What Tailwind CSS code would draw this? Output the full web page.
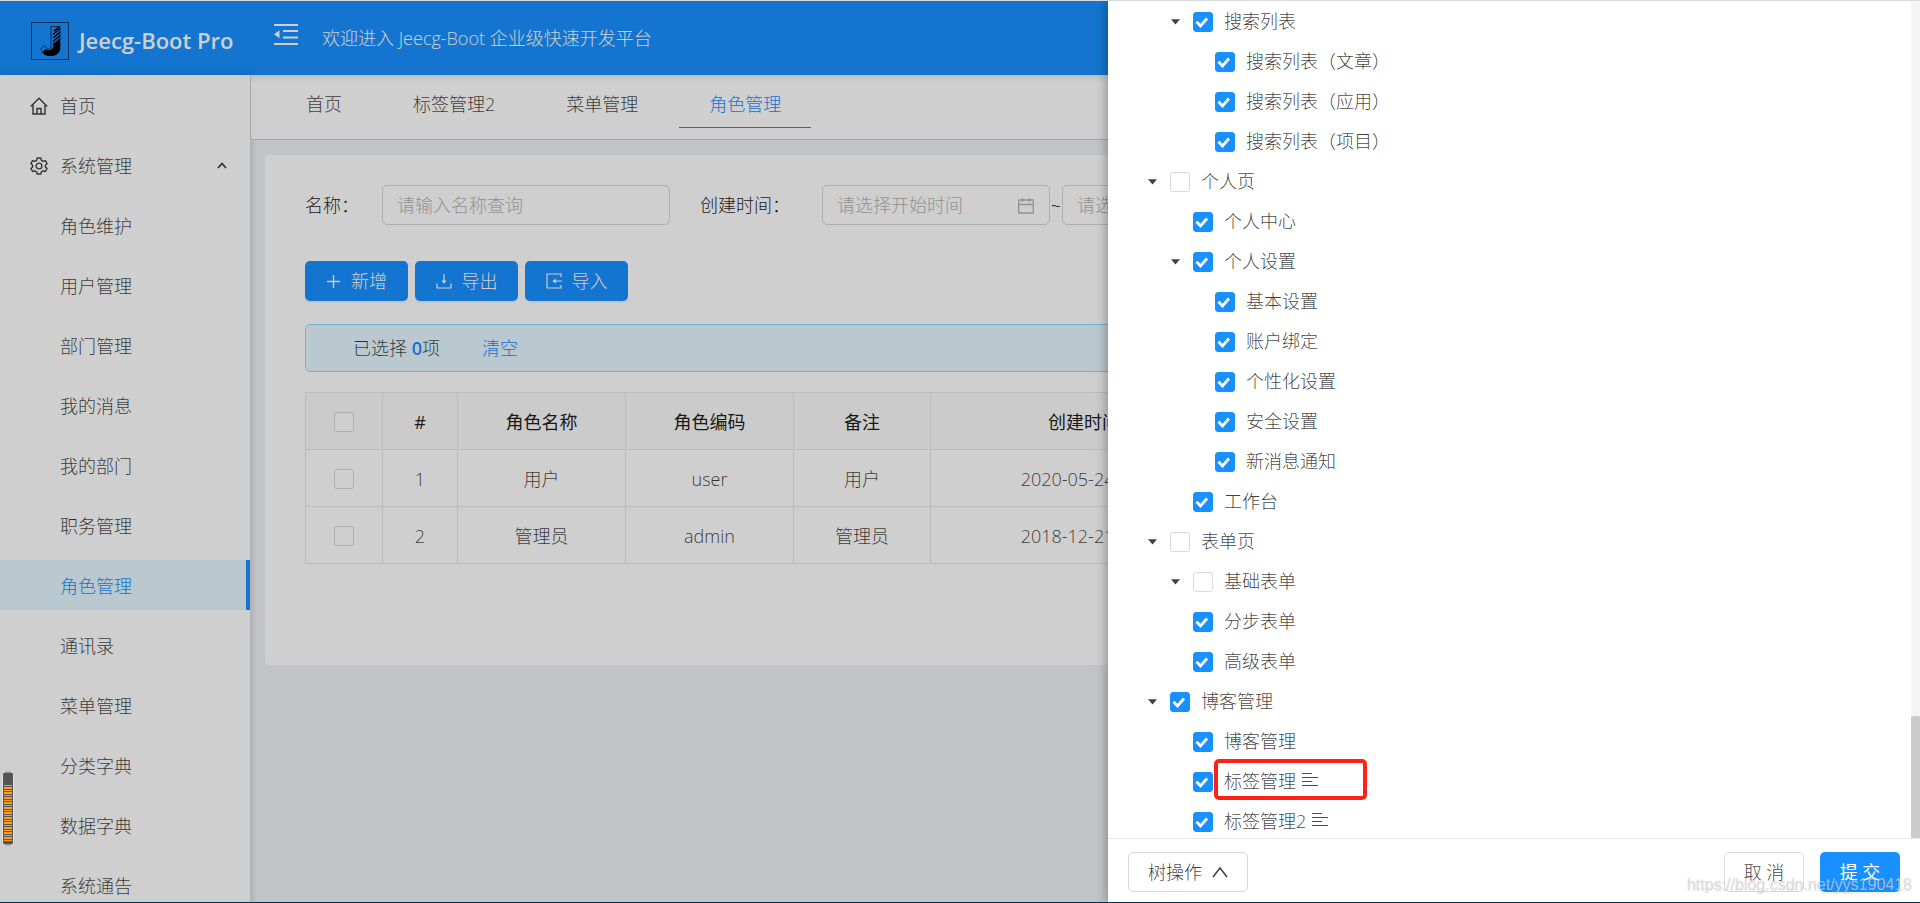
<!DOCTYPE html>
<html lang="zh-CN">
<head>
<meta charset="utf-8">
<title>Jeecg-Boot Pro</title>
<script src="https://cdn.jsdelivr.net/npm/@tailwindcss/browser@4"></script>
</head>
<body class="relative flex h-screen flex-col overflow-hidden bg-[#f0f2f5] font-['Open_Sans','Noto_Sans_CJK_SC',sans-serif] text-[18px] leading-6 font-light text-black/75">

<!-- Application -->
<header class="mt-px flex h-[74px] shrink-0 items-center bg-[#1890ff] text-white">
  <a href="#" class="flex w-[250px] items-center gap-[10px] pl-[31px] text-[22px] font-semibold whitespace-nowrap text-white">
    <svg class="mt-[6px] size-[38px]" viewBox="0 0 38 38" fill="none">
      <rect x=".5" y=".5" width="37" height="37" stroke="#0b3a6e"/>
      <path d="M20 4.500h9v21c0 5-4 8-9 8s-9-1-10-7l4-3c1 3 3 4 5 3 1-.5 1-2 1-4z" stroke="#0a3566" stroke-width="1"/>
      <path d="M29 18v8c0 5-4 8-9 8-4 0-7-1-8.500-4l3-3c3 2 7 1 8-3V21z" fill="#000"/>
      <path d="M23 9l5-4M22 12.500l7-6M22 16l7-6M22 19.500l7-6M22 23l7-6" stroke="#000" stroke-width="1.600"/>
    </svg>
    <span class="pt-1">Jeecg-Boot Pro</span>
  </a>
  <button type="button" aria-label="收起菜单" class="mb-[7px] ml-6">
    <svg class="h-[21px] w-6" viewBox="0 0 24 21" fill="currentColor"><path d="M0 0h24v2H0zM0 19h24v2H0zM9 6h15v2H9zM9 12.500h15v2H9zM0 10.200l5.500-4v8z"/></svg>
  </button>
  <span class="ml-6 whitespace-nowrap">欢迎进入 Jeecg-Boot 企业级快速开发平台</span>
</header>

<div class="flex min-h-0 flex-1">
  <aside class="relative z-10 w-[250px] shrink-0 overflow-hidden bg-white pt-[5px] shadow-[2px_0_6px_rgba(0,21,41,0.15)]">
    <nav class="flex flex-col gap-[10px]">
      <a href="#" class="flex h-[50px] items-center gap-3 pt-px pl-[30px]">
        <svg class="size-[18px]" viewBox="0 0 18 18" fill="none" stroke="currentColor" stroke-width="1.400"><path d="M.7 9.500 9 1.200l8.300 8.300M3 8v9h12V8M7 17v-5.500h4V17"/></svg>首页</a>
      <button type="button" class="flex h-[50px] items-center gap-3 pt-px pr-[23px] pl-[30px] text-left">
        <svg class="size-[18px]" viewBox="0 0 18 18" fill="none" stroke="currentColor" stroke-width="1.400" stroke-linejoin="round"><path d="M7.200 1h3.600l.6 2.300 1.700 1 2.300-.7 1.700 3-1.700 1.600v1.700l1.700 1.600-1.700 3-2.300-.7-1.700 1-.6 2.200H7.200l-.6-2.200-1.700-1-2.300.7-1.700-3 1.700-1.600V8.200L.9 6.600l1.700-3 2.300.7 1.700-1z"/><circle cx="9" cy="9" r="2.900"/></svg><span class="flex-1">系统管理</span>
        <svg class="h-[7px] w-[10px]" viewBox="0 0 10 7" fill="none" stroke="currentColor" stroke-width="1.800"><path d="m1 6 4-4.500L9 6"/></svg></button>
      <a href="#" class="flex h-[50px] items-center pt-px pl-[60px]">角色维护</a>
      <a href="#" class="flex h-[50px] items-center pt-px pl-[60px]">用户管理</a>
      <a href="#" class="flex h-[50px] items-center pt-px pl-[60px]">部门管理</a>
      <a href="#" class="flex h-[50px] items-center pt-px pl-[60px]">我的消息</a>
      <a href="#" class="flex h-[50px] items-center pt-px pl-[60px]">我的部门</a>
      <a href="#" class="flex h-[50px] items-center pt-px pl-[60px]">职务管理</a>
      <a href="#" class="flex h-[50px] items-center border-r-4 border-[#1890ff] bg-[#e6f7ff] pt-px pl-[60px] text-[#1890ff]">角色管理</a>
      <a href="#" class="flex h-[50px] items-center pt-px pl-[60px]">通讯录</a>
      <a href="#" class="flex h-[50px] items-center pt-px pl-[60px]">菜单管理</a>
      <a href="#" class="flex h-[50px] items-center pt-px pl-[60px]">分类字典</a>
      <a href="#" class="flex h-[50px] items-center pt-px pl-[60px]">数据字典</a>
      <a href="#" class="flex h-[50px] items-center pt-px pl-[60px]">系统通告</a>
    </nav>
  </aside>

  <div class="flex min-w-0 flex-1 flex-col">
    <nav class="relative z-10 flex h-[65px] shrink-0 items-start gap-[11px] border-b border-l border-[#ccced0] bg-white pl-[25px] shadow-[inset_0_6px_6px_-4px_rgba(0,21,41,0.12)]">
      <a href="#" class="flex h-[53px] items-center border-b border-transparent px-[30px] pt-[6px]">首页</a>
      <a href="#" class="flex h-[53px] items-center border-b border-transparent px-[30px] pt-[6px]">标签管理2</a>
      <a href="#" class="flex h-[53px] items-center border-b border-transparent px-[30px] pt-[6px]">菜单管理</a>
      <a href="#" class="flex h-[53px] items-center border-b border-[#1890ff] px-[30px] pt-[6px] text-[#1890ff]">角色管理</a>
    </nav>

    <main class="mx-[15px] mt-[15px] h-[510px] rounded-[3px] bg-white px-10 pt-[30px]">
      <form class="flex h-10 items-center text-black/90">
        <label for="name" class="w-[77px] whitespace-nowrap">名称：</label>
        <input id="name" type="text" placeholder="请输入名称查询" class="h-10 w-[288px] rounded-[5px] border border-[#d9d9d9] px-[14px] placeholder:text-[#b5b5b5]">
        <label for="start" class="ml-[30px] w-[122px] whitespace-nowrap">创建时间：</label>
        <div class="flex h-10 w-[228px] items-center rounded-[5px] border border-[#d9d9d9] pr-[15px] pl-[14px] text-[#b5b5b5]">
          <input id="start" type="text" placeholder="请选择开始时间" class="min-w-0 flex-1 placeholder:text-[#b5b5b5]">
          <svg class="h-[17px] w-4" viewBox="0 0 16 17" fill="none" stroke="currentColor" stroke-width="1.300"><path d="M.7 3h14.600v13H.7zM.7 7.500h14.600M4.500 1v4M11.500 1v4"/></svg>
        </div>
        <span class="w-3 text-center">~</span>
        <div class="flex h-10 w-[228px] items-center rounded-[5px] border border-[#d9d9d9] px-[14px]">
          <input type="text" aria-label="结束时间" placeholder="请选择结束时间" class="min-w-0 flex-1 placeholder:text-[#b5b5b5]">
        </div>
      </form>

      <div class="mt-9 flex gap-[7px] text-white">
        <button type="button" class="flex h-10 w-[103px] items-center justify-center gap-[10px] rounded-[5px] bg-[#1890ff] shadow-[0_2px_0_rgba(0,0,0,0.05)]">
          <svg class="size-[15px]" viewBox="0 0 15 15" stroke="currentColor" stroke-width="1.400"><path d="M7.500 1v13M1 7.500h13"/></svg>新增</button>
        <button type="button" class="flex h-10 w-[103px] items-center justify-center gap-[10px] rounded-[5px] bg-[#1890ff] shadow-[0_2px_0_rgba(0,0,0,0.05)]">
          <svg class="size-4" viewBox="0 0 16 16" fill="none" stroke="currentColor" stroke-width="1.200"><path d="M8 1v9M1 10.500V15h14v-4.500"/><path d="M5.500 7.500h5L8 10.800z" fill="currentColor" stroke="none"/></svg>导出</button>
        <button type="button" class="flex h-10 w-[103px] items-center justify-center gap-[10px] rounded-[5px] bg-[#1890ff] shadow-[0_2px_0_rgba(0,0,0,0.05)]">
          <svg class="size-4" viewBox="0 0 16 16" fill="none" stroke="currentColor" stroke-width="1.200"><path d="M15 4V1H1v14h14v-3M7 8h9"/><path d="M10 5.500v5L6.500 8z" fill="currentColor" stroke="none"/></svg>导入</button>
      </div>

      <div class="mt-[23px] flex h-12 items-center rounded-[5px] border border-[#91d5ff] bg-[#e6f7ff] pl-[47px]">
        <span>已选择&nbsp;<b class="font-semibold text-[#1890ff]">0</b>项</span>
        <a href="#" class="ml-[42px] text-[#1890ff]">清空</a>
      </div>

      <table class="mt-5 w-full table-fixed border-collapse text-center">
        <colgroup><col class="w-[77px]"><col class="w-[75px]"><col class="w-[168px]"><col class="w-[168px]"><col class="w-[137px]"><col class="w-[349px]"><col></colgroup>
        <thead>
          <tr class="h-[57px] bg-[#fafafa] text-black/90">
            <th class="border border-[#e8e8e8] pt-[2px]"><input type="checkbox" aria-label="全选" class="block size-5 mx-auto appearance-none rounded-[3px] border border-[#d9d9d9] bg-white"></th>
            <th class="border border-[#e8e8e8] pt-[2px] font-normal">#</th>
            <th class="border border-[#e8e8e8] pt-[2px] font-normal">角色名称</th>
            <th class="border border-[#e8e8e8] pt-[2px] font-normal">角色编码</th>
            <th class="border border-[#e8e8e8] pt-[2px] font-normal">备注</th>
            <th class="border border-[#e8e8e8] pt-[2px] font-normal"><span class="inline-flex items-center gap-7">创建时间<svg class="h-4 w-[14px] text-[#bfbfbf]" viewBox="0 0 14 16" fill="currentColor"><path d="m7 1 5 6H2zM7 15l5-6H2z"/></svg></span></th>
            <th class="border border-[#e8e8e8] pt-[2px] font-normal">操作</th>
          </tr>
        </thead>
        <tbody>
          <tr class="h-[57px]">
            <td class="border border-[#e8e8e8] pt-[2px]"><input type="checkbox" aria-label="选择用户" class="block size-5 mx-auto appearance-none rounded-[3px] border border-[#d9d9d9] bg-white"></td>
            <td class="border border-[#e8e8e8] pt-[2px]">1</td><td class="border border-[#e8e8e8] pt-[2px]">用户</td><td class="border border-[#e8e8e8] pt-[2px]">user</td><td class="border border-[#e8e8e8] pt-[2px]">用户</td><td class="border border-[#e8e8e8] pt-[2px]">2020-05-24 00:00:00</td><td class="border border-[#e8e8e8]"></td>
          </tr>
          <tr class="h-[57px]">
            <td class="border border-[#e8e8e8] pt-[2px]"><input type="checkbox" aria-label="选择管理员" class="block size-5 mx-auto appearance-none rounded-[3px] border border-[#d9d9d9] bg-white"></td>
            <td class="border border-[#e8e8e8] pt-[2px]">2</td><td class="border border-[#e8e8e8] pt-[2px]">管理员</td><td class="border border-[#e8e8e8] pt-[2px]">admin</td><td class="border border-[#e8e8e8] pt-[2px]">管理员</td><td class="border border-[#e8e8e8] pt-[2px]">2018-12-21 00:00:00</td><td class="border border-[#e8e8e8]"></td>
          </tr>
        </tbody>
      </table>
    </main>
  </div>
</div>

<!-- Mask and drawer -->
<div class="absolute inset-0 z-20 bg-black/19"></div>
<section aria-label="角色权限配置" class="absolute inset-y-0 right-0 z-30 flex w-[812px] flex-col bg-white shadow-[-2px_0_10px_rgba(0,0,0,0.3)]">
  <div class="flex min-h-0 flex-1">
    <ul id="tree" class="min-w-0 flex-1 overflow-hidden pt-[2px]"></ul>
    <div class="flex w-[9px] flex-col justify-end bg-[#f5f5f5]"><div class="h-[122px] rounded-t-[2px] bg-[#cbcbcb]"></div></div>
  </div>
  <footer class="flex h-[65px] shrink-0 items-start border-t border-[#e8e8e8] px-5 pt-[13px]">
    <button type="button" class="flex h-10 w-[120px] items-center justify-center gap-[10px] rounded-[5px] border border-[#d9d9d9] bg-white">树操作
      <svg class="h-3 w-4" viewBox="0 0 16 12" fill="none" stroke="currentColor" stroke-width="1.500"><path d="m1 11 7-9 7 9"/></svg></button>
    <button type="button" class="mr-4 ml-auto h-10 w-20 rounded-[5px] border border-[#d9d9d9] bg-white">取 消</button>
    <button type="button" class="h-10 w-20 rounded-[5px] bg-[#1890ff] font-normal text-white shadow-[0_2px_0_rgba(0,0,0,0.05)]">提 交</button>
  </footer>
</section>

<!-- Overlays on the window edge -->
<svg class="absolute top-[771px] left-[2px] z-40 h-[76px] w-3" viewBox="0 0 12 76">
  <path d="M3 .5h6M3 74.500h6" stroke="#888" stroke-width="1"/>
  <rect x=".5" y="1" width="11" height="73" rx="2.500" fill="#555" stroke="#e4e4e4"/>
  <path d="M6 14v57" stroke="#ff9f1c" stroke-width="8" stroke-dasharray="1 1 2 1"/>
</svg>
<div class="absolute right-[8px] bottom-[7px] z-40 font-['Liberation_Sans',sans-serif] text-base font-normal leading-[22px] text-[#d4d4d4]/75 [text-shadow:0_1px_2px_rgba(0,0,0,0.12)]">https://blog.csdn.net/yys190418</div>
<div class="absolute inset-x-0 top-0 z-40 h-px bg-[#d9dbe0]"></div>
<div class="absolute inset-x-0 bottom-0 z-40 h-px bg-[#00304d]"></div>

<template id="row">
  <li class="flex h-10 items-center">
    <span class="mr-[7px] flex w-[22px] justify-center"><svg class="h-[6px] w-[9px]" viewBox="0 0 9 6" fill="currentColor"><path d="M0 .3h9L4.500 5.500z"/></svg></span>
    <label class="relative flex items-center gap-[11px]">
      <span class="grid size-5">
        <input type="checkbox" class="peer size-5 appearance-none rounded-[3px] border border-[#d9d9d9] bg-white [grid-area:1/1] checked:border-[#1890ff] checked:bg-[#1890ff]">
        <svg class="pointer-events-none hidden size-5 [grid-area:1/1] peer-checked:block" viewBox="0 0 20 20" fill="none" stroke="#fff" stroke-width="2.800"><path d="m3.500 9.700 4 4.300 6.500-7.500"/></svg>
      </span>
      <span class="name pb-[2px]"></span>
    </label>
  </li>
</template>
<template id="rule">
  <svg class="mb-1 ml-[6px] h-[14px] w-4" viewBox="0 0 16 14" stroke="#f00" stroke-width="1"><path d="M0 .5h10M0 4.500h16M0 8.500h10M0 12.500h16"/></svg>
</template>
<template id="frame">
  <span class="pointer-events-none absolute top-[-10px] left-[21px] h-[41px] w-[153px] rounded-[5px] border-4 border-[#ff2016]"></span>
</template>
<script>
  // [depth, name, checked, expandable, has data rule, framed]
  const nodes = [
    [1, '搜索列表', 1, 1], [2, '搜索列表（文章）', 1], [2, '搜索列表（应用）', 1], [2, '搜索列表（项目）', 1],
    [0, '个人页', 0, 1], [1, '个人中心', 1], [1, '个人设置', 1, 1],
    [2, '基本设置', 1], [2, '账户绑定', 1], [2, '个性化设置', 1], [2, '安全设置', 1], [2, '新消息通知', 1],
    [1, '工作台', 1], [0, '表单页', 0, 1], [1, '基础表单', 0, 1], [1, '分步表单', 1], [1, '高级表单', 1],
    [0, '博客管理', 1, 1], [1, '博客管理', 1], [1, '标签管理', 1, 0, 1, 1], [1, '标签管理2', 1, 0, 1]
  ];
  const indent = ['ml-[33px]', 'ml-[56px]', 'ml-[78px]'];
  const get = id => document.getElementById(id).content.firstElementChild.cloneNode(true);
  for (const [depth, name, checked, open, rule, framed] of nodes) {
    const li = get('row'), label = li.querySelector('label'), arrow = li.firstElementChild;
    arrow.classList.add(indent[depth]);
    if (!open) arrow.innerHTML = '';
    li.querySelector('input').checked = !!checked;
    li.querySelector('.name').textContent = name;
    if (rule) li.append(get('rule'));
    if (framed) label.append(get('frame'));
    document.getElementById('tree').append(li);
  }
</script>
</body>
</html>
